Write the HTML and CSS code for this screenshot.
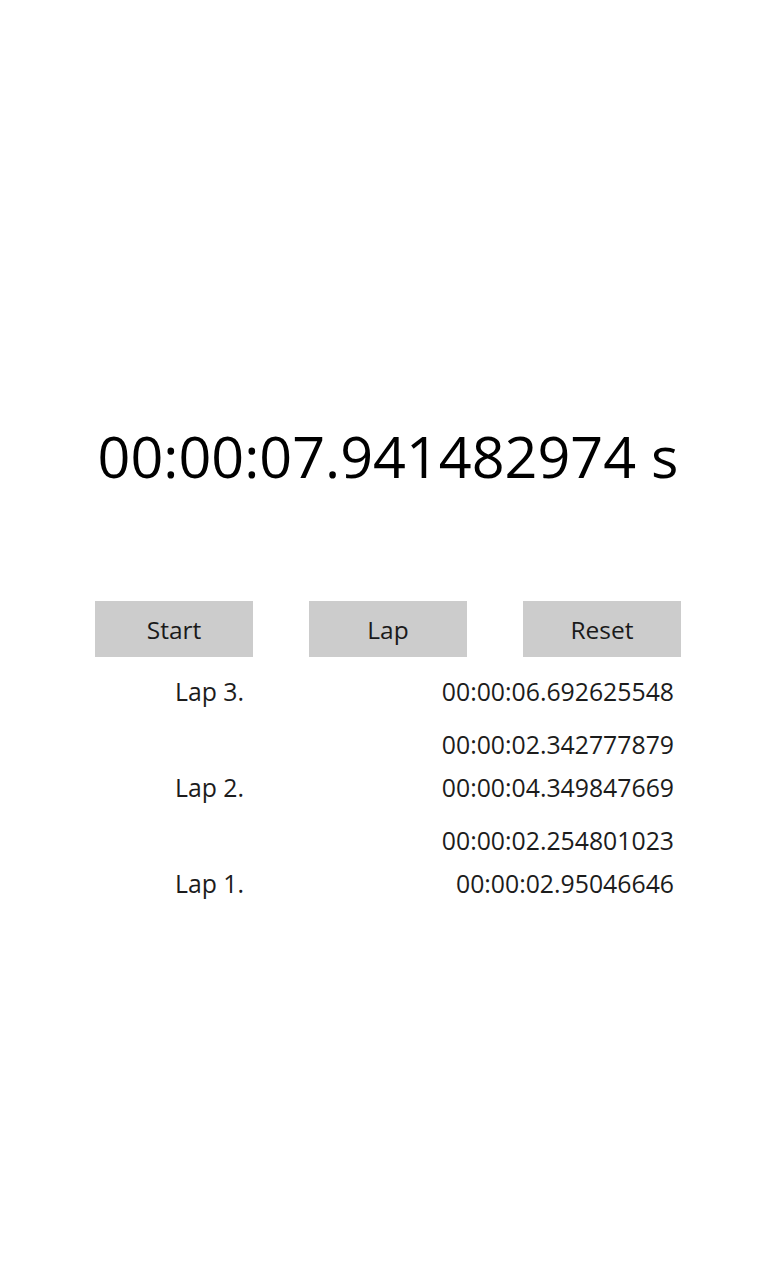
FILE: index.html
```html
<!DOCTYPE html>
<html lang="en">
<head>
<meta charset="utf-8">
<title>Stopwatch</title>
<link rel="stylesheet" href="styles.css">
</head>
<body>
<main class="app">
  <div class="timer">00:00:07.941482974 s</div>
  <div class="controls">
    <button class="btn">Start</button>
    <button class="btn">Lap</button>
    <button class="btn">Reset</button>
  </div>
  <div class="laps">
    <div class="lap-label">Lap 3.</div>
    <div class="lap-value">00:00:06.692625548</div>
    <div class="lap-label split"></div>
    <div class="lap-value split">00:00:02.342777879</div>
    <div class="lap-label">Lap 2.</div>
    <div class="lap-value">00:00:04.349847669</div>
    <div class="lap-label split"></div>
    <div class="lap-value split">00:00:02.254801023</div>
    <div class="lap-label">Lap 1.</div>
    <div class="lap-value">00:00:02.95046646</div>
  </div>
</main>
</body>
</html>
```
FILE: styles.css
```css
html, body {
  margin: 0;
  padding: 0;
  background: #ffffff;
}

body {
  font-family: "Open Sans", "Noto Sans", sans-serif;
  color: #111111;
}

.app {
  width: 586px;
  margin-left: 95px;
  padding-top: 416px;
  display: flex;
  flex-direction: column;
}

.timer {
  font-size: 57.5px;
  line-height: 80px;
  height: 80px;
  text-align: center;
  color: #000000;
  white-space: nowrap;
}

.controls {
  margin-top: 105px;
  display: flex;
  justify-content: space-between;
}

.btn {
  width: 158px;
  height: 56px;
  border: none;
  background: #cccccc;
  font-family: "Open Sans", "Noto Sans", sans-serif;
  font-size: 24.5px;
  color: #1a1a1a;
  padding: 0;
}

.laps {
  margin-top: 13px;
  display: grid;
  grid-template-columns: 1fr 1fr;
  font-size: 24.8px;
  line-height: 43px;
  color: #1c1c1c;
}

.lap-label {
  padding-left: 80px;
}

.lap-value {
  text-align: right;
  padding-right: 7px;
  white-space: nowrap;
}

.split {
  margin-top: 10px;
}
```
